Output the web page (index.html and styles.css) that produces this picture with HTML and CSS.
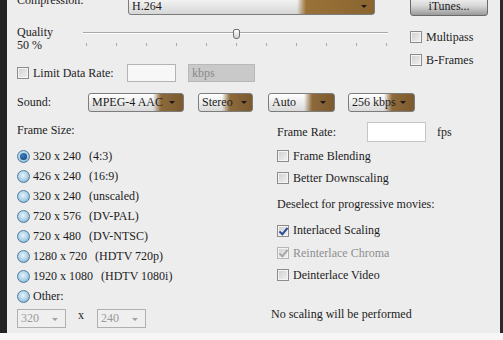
FILE: index.html
```html
<!DOCTYPE html>
<html lang="en">
<head>
    <meta charset="UTF-8">
    <title>Export Settings</title>
    <link rel="stylesheet" href="styles.css">
</head>
<body>
    <div class="window">
        <div class="top">
            <div class="top-main">
                <div class="row compression-row">
                    <span class="label compression-label">Compression:</span>
                    <div class="select select-compression">
                        <span class="select-value">H.264</span>
                        <span class="select-btn"><span class="arrow"></span></span>
                    </div>
                </div>

                <div class="quality-row">
                    <div class="quality-label">Quality<br>50 %</div>
                    <div class="slider">
                        <div class="track"></div>
                        <div class="thumb"></div>
                        <div class="ticks">
                            <span></span><span></span><span></span><span></span><span></span><span></span>
                            <span></span><span></span><span></span><span></span><span></span>
                        </div>
                    </div>
                </div>

                <div class="row limit-row">
                    <span class="check"></span>
                    <span class="label limit-label">Limit Data Rate:</span>
                    <span class="textbox rate-box"></span>
                    <span class="unit-box">kbps</span>
                </div>
            </div>

            <div class="top-side">
                <button class="itunes-btn">iTunes...</button>
                <div class="check-row multipass"><span class="check"></span>Multipass</div>
                <div class="check-row bframes"><span class="check"></span>B-Frames</div>
            </div>
        </div>

        <div class="row sound-row">
            <span class="label sound-label">Sound:</span>
            <div class="select select-format"><span class="select-value">MPEG-4 AAC</span><span class="select-btn"><span class="arrow"></span></span></div>
            <div class="select select-channels"><span class="select-value">Stereo</span><span class="select-btn"><span class="arrow"></span></span></div>
            <div class="select select-rate"><span class="select-value">Auto</span><span class="select-btn"><span class="arrow"></span></span></div>
            <div class="select select-bitrate"><span class="select-value">256 kbps</span><span class="select-btn"><span class="arrow"></span></span></div>
        </div>

        <div class="columns">
            <div class="col-left">
                <div class="section-label">Frame Size:</div>
                <div class="radio-list">
                    <div class="radio-row"><span class="radio selected"></span><span class="dim">320 x 240</span><span class="note">(4:3)</span></div>
                    <div class="radio-row"><span class="radio"></span><span class="dim">426 x 240</span><span class="note">(16:9)</span></div>
                    <div class="radio-row"><span class="radio"></span><span class="dim">320 x 240</span><span class="note">(unscaled)</span></div>
                    <div class="radio-row"><span class="radio"></span><span class="dim">720 x 576</span><span class="note">(DV-PAL)</span></div>
                    <div class="radio-row"><span class="radio"></span><span class="dim">720 x 480</span><span class="note">(DV-NTSC)</span></div>
                    <div class="radio-row"><span class="radio"></span><span class="dim">1280 x 720</span><span class="note">(HDTV 720p)</span></div>
                    <div class="radio-row"><span class="radio"></span><span class="dim">1920 x 1080</span><span class="note">(HDTV 1080i)</span></div>
                    <div class="radio-row"><span class="radio"></span><span class="dim">Other:</span></div>
                </div>
                <div class="other-row">
                    <span class="combo">320<span class="combo-arrow"></span></span>
                    <span class="times">x</span>
                    <span class="combo">240<span class="combo-arrow"></span></span>
                </div>
            </div>

            <div class="col-right">
                <div class="row framerate-row">
                    <span class="label framerate-label">Frame Rate:</span>
                    <span class="textbox fps-box"></span>
                    <span class="fps">fps</span>
                </div>
                <div class="check-row opt"><span class="check"></span>Frame Blending</div>
                <div class="check-row opt"><span class="check"></span>Better Downscaling</div>
                <div class="hint">Deselect for progressive movies:</div>
                <div class="check-row opt interlaced"><span class="check checked"></span>Interlaced Scaling</div>
                <div class="check-row opt disabled"><span class="check checked"></span>Reinterlace Chroma</div>
                <div class="check-row opt"><span class="check"></span>Deinterlace Video</div>
                <div class="status">No scaling will be performed</div>
            </div>
        </div>
    </div>
    <div class="bottom-strip"></div>
</body>
</html>
```

FILE: styles.css
```css
* {
    box-sizing: border-box;
    margin: 0;
    padding: 0;
}

body {
    font-family: "Liberation Serif", "DejaVu Serif", serif;
    font-size: 12px;
    color: #1c1c1c;
    background: #f6f6f6;
    overflow: hidden;
}

.window {
    height: 333px;
    background: #ededed;
    border-left: 7px solid #232323;
    border-right: 3px solid #2a2a2a;
    padding-left: 10px;
    overflow: hidden;
}

.bottom-strip {
    height: 7px;
    background: #f6f6f6;
}

.row {
    display: flex;
    align-items: center;
}

/* ---------- top block ---------- */

.top {
    display: flex;
    margin-top: -7px;
}

.top-main {
    width: 393px;
}

.compression-row {
    height: 22px;
    align-items: flex-start;
}

.compression-label {
    width: 111px;
    line-height: 14px;
}

/* dropdowns: light body fading into a brown button */
.select {
    display: flex;
    height: 19px;
    border: 1px solid #7c7c7c;
    border-radius: 3px;
    background:
        linear-gradient(to right, rgba(142, 106, 58, 0) calc(100% - 30px), #8e6a3a calc(100% - 22px), #7b5a2f),
        linear-gradient(#ffffff, #dadada);
    overflow: hidden;
}

.select-value {
    flex: 1;
    min-width: 0;
    padding-left: 3px;
    line-height: 17px;
    white-space: nowrap;
}

.select-btn {
    width: 16px;
    display: flex;
    align-items: center;
    justify-content: center;
    flex-shrink: 0;
    margin-right: 3px;
}

.arrow {
    width: 0;
    height: 0;
    border-left: 3px solid transparent;
    border-right: 3px solid transparent;
    border-top: 3px solid #1a1a1a;
}

.select-compression {
    width: 247px;
    height: 22px;
    background:
        linear-gradient(to right, rgba(154, 114, 56, 0) 168px, #9a7238 177px, #8a6530),
        linear-gradient(#ffffff, #d6d6d6);
}

.select-compression .select-value {
    line-height: 24px;
}

.select-compression .select-btn {
    width: 12px;
    margin-right: 4px;
    padding-top: 4px;
}

.quality-row {
    display: flex;
    margin-top: 12px;
    height: 25px;
}

.quality-label {
    width: 66px;
    line-height: 13px;
    margin-top: -1px;
}

.slider {
    position: relative;
    width: 305px;
}

.track {
    margin-top: 5px;
    height: 2px;
    border-top: 1px solid #a8a8a8;
    border-bottom: 1px solid #ffffff;
}

.thumb {
    position: absolute;
    left: 150px;
    top: 2px;
    width: 7px;
    height: 10px;
    border: 1px solid #6e6e6e;
    border-radius: 2px 2px 3px 3px;
    background: linear-gradient(#ffffff, #d0d0d0);
}

.ticks {
    display: flex;
    gap: 29px;
    padding-left: 3px;
    margin-top: 9px;
}

.ticks span {
    width: 1px;
    height: 3px;
    background: #a9a9a9;
}

.limit-row {
    margin-top: 12px;
    height: 18px;
}

.check {
    display: inline-block;
    width: 12px;
    height: 12px;
    border: 1px solid #8c8c8c;
    box-shadow: inset 0 0 0 1px #f4f4f4;
    background: linear-gradient(135deg, #cfcfcf, #f2f2f2);
    flex-shrink: 0;
    position: relative;
}

.check.checked::after {
    content: "";
    position: absolute;
    left: 3px;
    top: 0;
    width: 3px;
    height: 7px;
    border-right: 2px solid #2a4f9a;
    border-bottom: 2px solid #2a4f9a;
    transform: rotate(40deg);
}

.limit-label {
    width: 94px;
    margin-left: 4px;
}

.textbox {
    display: inline-block;
    background: #f7f7f7;
    border: 1px solid #b4b4b4;
}

.rate-box {
    width: 49px;
    height: 18px;
}

.unit-box {
    width: 67px;
    height: 18px;
    margin-left: 12px;
    background: #c9c9c9;
    border: 1px solid #b8b8b8;
    color: #8a8a8a;
    padding-left: 3px;
    line-height: 16px;
}

.top-side {
    width: 78px;
}

.itunes-btn {
    display: block;
    width: 78px;
    height: 22px;
    margin-top: 1px;
    border: 1px solid #6a6a6a;
    border-radius: 3px;
    background: linear-gradient(#fbfbfb, #d6d6d6 55%, #9a9a9a);
    font-family: inherit;
    font-size: 12px;
    color: #1c1c1c;
    padding-top: 3px;
}

.check-row {
    display: flex;
    align-items: center;
    gap: 4px;
    height: 12px;
}

.multipass {
    margin-top: 15px;
}

.bframes {
    margin-top: 11px;
}

/* ---------- sound ---------- */

.sound-row {
    margin-top: 11px;
    height: 19px;
}

.sound-label {
    width: 71px;
}

.select-format { width: 96px; }
.select-channels { width: 55px; margin-left: 14px; }
.select-rate { width: 67px; margin-left: 15px; }
.select-bitrate { width: 67px; margin-left: 13px; }

.select-channels .select-btn { width: 10px; }

/* ---------- frame size / options ---------- */

.columns {
    display: flex;
    margin-top: 10px;
}

.col-left {
    width: 260px;
}

.section-label {
    line-height: 14px;
    margin-top: 1px;
}

.radio-list {
    margin-top: 9px;
}

.radio-row {
    display: flex;
    align-items: center;
    height: 20px;
}

.radio {
    width: 13px;
    height: 13px;
    border-radius: 50%;
    border: 1px solid #4f7f9f;
    background: radial-gradient(circle at 45% 40%, #e6f3fb, #a9cfe6 55%, #5e95bc);
    margin-right: 3px;
    position: relative;
    flex-shrink: 0;
}

.radio.selected::after {
    content: "";
    position: absolute;
    left: 2px;
    top: 2px;
    width: 7px;
    height: 7px;
    border-radius: 50%;
    background: radial-gradient(circle at 40% 35%, #3d7fc0, #0f3c70);
}

.note {
    margin-left: 8px;
}

.other-row {
    display: flex;
    align-items: center;
    margin-top: 3px;
    height: 19px;
}

.combo {
    position: relative;
    width: 49px;
    height: 19px;
    border: 1px solid #b0b0b0;
    background: #efefef;
    color: #9a9a9a;
    padding-left: 3px;
    line-height: 17px;
}

.combo-arrow {
    position: absolute;
    right: 7px;
    top: 8px;
    border-left: 3px solid transparent;
    border-right: 3px solid transparent;
    border-top: 3px solid #a0a0a0;
}

.times {
    width: 31px;
    padding-left: 12px;
    margin-top: -6px;
}

.col-right {
    width: 220px;
}

.framerate-row {
    height: 20px;
}

.framerate-label {
    width: 90px;
}

.fps-box {
    width: 59px;
    height: 20px;
    background: #ffffff;
    border-color: #c6c6c6;
}

.fps {
    margin-left: 11px;
}

.opt {
    height: 22px;
}

.framerate-row + .opt {
    margin-top: 3px;
}

.hint {
    height: 22px;
    line-height: 22px;
    margin-top: 4px;
}

.interlaced {
    margin-top: 4px;
    height: 23px;
}

.disabled {
    color: #8e8e8e;
    height: 22px;
}

.disabled .check {
    border-color: #b5b5b5;
}

.disabled .check.checked::after {
    border-color: #a8a8a8;
}

.disabled + .opt {
    margin-top: 0;
}

.status {
    margin-top: 17px;
    margin-left: -6px;
    line-height: 22px;
}
```
